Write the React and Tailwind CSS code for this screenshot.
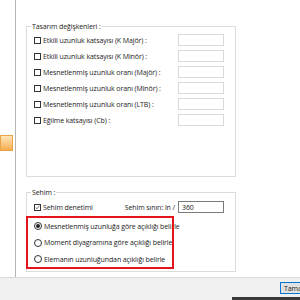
import React from "react";

const font = { fontFamily: '"Open Sans", "Liberation Sans", Arial, sans-serif' };

function Box({ checked }) {
  return (
    <span className="w-[7px] h-[7px] border border-[#333] bg-white flex items-center justify-center shrink-0">
      {checked && (
        <svg width="7" height="7" viewBox="0 0 7 7">
          <path d="M1 3.5 L2.8 5.3 L6 1" fill="none" stroke="#333" strokeWidth="0.9" />
        </svg>
      )}
    </span>
  );
}

function Radio({ checked }) {
  return (
    <span className="w-[8px] h-[8px] rounded-full border border-[#333] bg-white flex items-center justify-center shrink-0">
      {checked && <span className="w-[4px] h-[4px] rounded-full bg-[#222]" />}
    </span>
  );
}

function Field() {
  return <span className="w-[46px] h-[12px] border border-[#dadada] bg-white shrink-0" />;
}

const rows = [
  "Etkili uzunluk katsayısı (K Majör) :",
  "Etkili uzunluk katsayısı (K Minör) :",
  "Mesnetlenmiş uzunluk oranı (Majör) :",
  "Mesnetlenmiş uzunluk oranı (Minör) :",
  "Mesnetlenmiş uzunluk oranı (LTB) :",
  "Eğilme katsayısı (Cb) :",
];

const radios = [
  ["Mesnetlenmiş uzunluğa göre açıklığı belirle", true],
  ["Moment diyagramına göre açıklığı belirle", false],
  ["Elemanın uzunluğundan açıklığı belirle", false],
];

export default function App() {
  return (
    <div className="w-[300px] h-[300px] overflow-hidden bg-white flex flex-col text-[7px] text-[#222] leading-none tracking-[-0.1px]" style={font}>
      <div className="h-[277px] flex shrink-0">
        <div className="w-[16px] border-r border-[#b4b4b4] pt-[135px] shrink-0">
          <div className="w-[13px] h-[16px] border border-[#e9a448] bg-linear-to-b from-[#fee6b8] to-[#f7ad4c]" />
        </div>
        <div className="flex flex-col pl-[10px] pt-[26px]">
          <div className="relative w-[210px] h-[151px] border border-[#dcdcdc] pt-[5px] pl-[7px] pr-[11px]">
            <span className="absolute left-[4px] -top-[4px] bg-white px-[1px]">Tasarım değişkenleri :</span>
            {rows.map((r) => (
              <div key={r} className="h-[16px] flex items-center justify-between">
                <div className="flex items-center gap-[2px]">
                  <Box />
                  <span>{r}</span>
                </div>
                <Field />
              </div>
            ))}
          </div>
          <div className="relative mt-[15px] w-[210px] h-[80px] border border-[#dcdcdc] pt-[6px] pl-[7px] pr-[11px]">
            <span className="absolute left-[4px] -top-[4px] bg-white px-[1px]">Sehim :</span>
            <div className="h-[16px] flex items-center justify-between">
              <div className="flex items-center gap-[2px]">
                <Box checked />
                <span>Sehim denetimi</span>
              </div>
              <div className="flex items-center gap-[3px]">
                <span>Sehim sınırı: ln /</span>
                <span className="w-[46px] h-[12px] border border-[#7a7a7a] bg-white flex items-center pl-[3px]">360</span>
              </div>
            </div>
            <div className="relative mt-[3px]">
              {radios.map(([t, c]) => (
                <div key={t} className="h-[16.5px] flex items-center gap-[2px]">
                  <Radio checked={c} />
                  <span>{t}</span>
                </div>
              ))}
              <div className="absolute -left-[8px] -top-[2px] w-[148px] h-[53px] border-[2.5px] border-[#e3141c] pointer-events-none" />
            </div>
          </div>
        </div>
      </div>
      <div className="flex-1 border-t border-[#dadada] bg-[#f0f0f0] flex flex-col">
        <div className="flex justify-end pt-[4px] h-[19px]">
          <div className="w-[30px] h-[12px] border border-[#0078d7] bg-[#e1e1e1] flex items-center pl-[3px] -mr-[10px]">Tamam</div>
        </div>
        <div className="flex-1 flex justify-end">
          <div className="w-[68px] bg-[#3a3a3a]" />
        </div>
      </div>
    </div>
  );
}
